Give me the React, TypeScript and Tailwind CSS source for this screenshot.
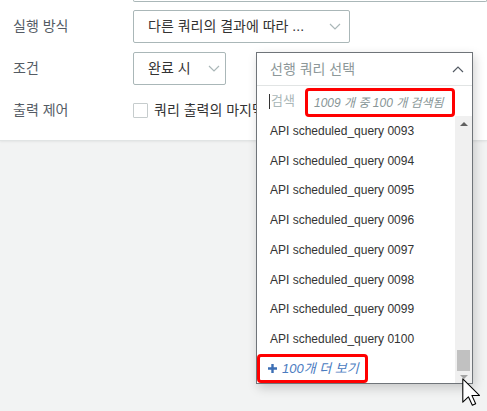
import { ReactNode } from 'react'

const items = ['0093', '0094', '0095', '0096', '0097', '0098', '0099', '0100']

function Chevron({ up = false, className = '' }: { up?: boolean; className?: string }) {
  return (
    <svg width="12" height="7" viewBox="0 0 12 7" className={className}>
      <path
        d={up ? 'M1 6 L6 1 L11 6' : 'M1 1 L6 6 L11 1'}
        fill="none"
        stroke="currentColor"
        strokeWidth="1.2"
      />
    </svg>
  )
}

function Row({ label, children }: { label: string; children: ReactNode }) {
  return (
    <div className="flex items-center h-[33px]">
      <div className="w-[133px] pl-[13px] text-[14px] text-[#545b64]">{label}</div>
      {children}
    </div>
  )
}

function Cursor() {
  return (
    <svg width="19" height="28" viewBox="0 0 12.5 18.5" className="absolute left-[462px] top-[378px]">
      <path
        d="M0.5 0.5 L0.5 16 L4.2 12.4 L6.8 18 L9 17 L6.5 11.5 L11.5 11.5 Z"
        fill="white"
        stroke="black"
        strokeWidth="0.7"
        strokeLinejoin="round"
      />
    </svg>
  )
}

export default function App() {
  return (
    <div className="relative w-[487px] h-[411px] overflow-hidden bg-[#f2f3f3] font-['Liberation_Sans','Noto_Sans_CJK_KR',sans-serif]">
      <div className="h-[141px] bg-white border-b border-[#e1e4e4] shadow-[0_1px_2px_rgba(0,0,0,0.06)]">
        <div className="ml-[133px] h-[2px] border-x border-b border-[#aab7b8] rounded-b-[3px]" />

        <div className="mt-[8px] flex flex-col gap-[9px]">
          <Row label="실행 방식">
            <div className="w-[217px] h-[33px] flex items-center justify-between pl-[14px] pr-[8px] border border-[#aab7b8] rounded-[2px] text-[14px] text-[#333]">
              <span>다른 쿼리의 결과에 따라 ...</span>
              <Chevron className="text-[#aab7b8]" />
            </div>
          </Row>
          <Row label="조건">
            <div className="w-[93px] h-[33px] flex items-center justify-between pl-[14px] pr-[5px] border border-[#aab7b8] rounded-[2px] text-[14px] text-[#333]">
              <span>완료 시</span>
              <Chevron className="text-[#aab7b8]" />
            </div>
          </Row>
          <Row label="출력 제어">
            <div className="flex items-center gap-[6px] text-[14px] text-[#333] whitespace-nowrap">
              <span className="w-[15px] h-[15px] border border-[#c6cccd] rounded-[1px] bg-white" />
              <span className="w-[102px] overflow-hidden">쿼리 출력의 마지막 결과만 사용</span>
            </div>
          </Row>
        </div>
      </div>

      <div className="absolute left-[256px] top-[52px] w-[217px] h-[332px] bg-white border border-[#6f7479] shadow-[2px_4px_10px_rgba(0,0,0,0.18)] flex flex-col">
        <div className="h-[33px] shrink-0 flex items-center justify-between pl-[13px] pr-[8px] border-b border-[#e1e4e4] text-[14px] text-[#8d9899]">
          <span>선행 쿼리 선택</span>
          <Chevron up className="text-[#545b64]" />
        </div>

        <div className="h-[30px] shrink-0 flex items-center pl-[12px]">
          <span className="w-px h-[15px] bg-[#333]" />
          <span className="ml-[1px] w-[34px] text-[13px] text-[#aab7b8]">검색</span>
          <div className="mt-[3px] w-[150px] h-[29px] border-[3px] border-[#f00] rounded-[4px] flex items-center pl-[6px] italic text-[12px] text-[#879596] whitespace-nowrap">
            1009 개 중 100 개 검색됨
          </div>
        </div>

        <div className="flex-1 flex min-h-0">
          <div className="flex-1 flex flex-col">
            {items.map(n => (
              <div key={n} className="h-[30px] flex items-center pl-[13px] text-[12px] text-[#333]">
                API scheduled_query {n}
              </div>
            ))}
            <div className="flex-1 flex items-end">
              <div className="w-[111px] h-[29px] border-[3px] border-[#f00] rounded-[4px] flex items-center pl-[8px] gap-[5px] italic text-[13px] text-[#4a7bbf]">
                <svg width="9" height="9" viewBox="0 0 9 9">
                  <path d="M4.5 0 V9 M0 4.5 H9" stroke="#3d6fb5" strokeWidth="2.4" />
                </svg>
                <span>100개 더 보기</span>
              </div>
            </div>
          </div>
          <div className="w-[17px] bg-[#f0f0f0] flex flex-col items-center justify-between pt-[6px] pb-[4px]">
            <svg width="8" height="4" viewBox="0 0 8 4"><path d="M0 4 L4 0 L8 4 Z" fill="#606060" /></svg>
            <div className="flex flex-col items-center gap-[4px]">
              <div className="w-[13px] h-[21px] bg-[#c1c1c1]" />
              <svg width="8" height="4" viewBox="0 0 8 4"><path d="M0 0 L4 4 L8 0 Z" fill="#a3a3a3" /></svg>
            </div>
          </div>
        </div>
      </div>

      <Cursor />
    </div>
  )
}
